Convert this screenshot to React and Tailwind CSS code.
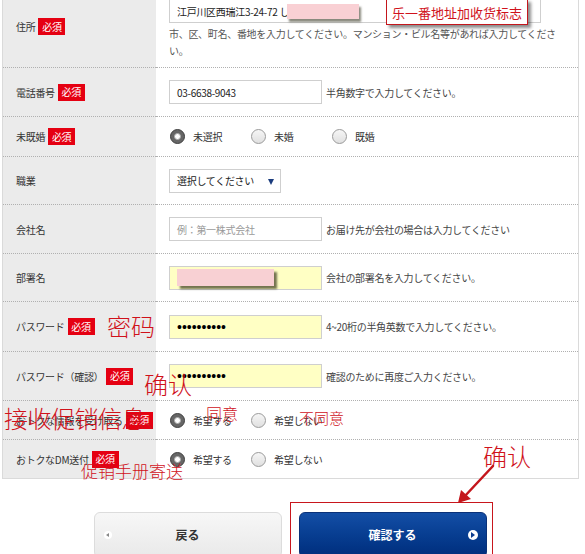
import React from "react";

const Badge = () => (
  <span className="inline-flex items-center justify-center w-[27px] h-[17px] bg-[#e50012] text-white text-[10px] leading-none shrink-0 tracking-[-0.3px]">
    必須
  </span>
);

const Label = ({ text, badge = true }) => (
  <div className="flex items-center gap-[3px] text-[10px] tracking-[-0.3px] text-[#333] whitespace-nowrap">
    <span>{text}</span>
    {badge && <Badge />}
  </div>
);

const Radio = ({ checked, label }) => (
  <div className="w-[81px] flex items-center gap-[8px] shrink-0">
    {checked ? (
      <span className="w-[15px] h-[15px] rounded-full bg-[#666] border border-[#3f3f3f] flex items-center justify-center shrink-0">
        <span className="w-[7px] h-[7px] rounded-full bg-white border border-[#aaa]" />
      </span>
    ) : (
      <span className="w-[15px] h-[15px] rounded-full border border-[#9a9a9a] bg-linear-to-b from-[#f6f6f6] to-[#e0e0e0] shrink-0" />
    )}
    <span className="text-[10px] tracking-[-0.3px] text-[#333] whitespace-nowrap">{label}</span>
  </div>
);

const Row = ({ h, label, children, last, labelClass = "items-center", rightClass = "items-center" }) => {
  const bb = last ? "" : "border-b border-dotted border-[#b0b0b0]";
  return (
    <div className={`flex ${h}`}>
      <div className={`w-[153px] shrink-0 bg-[#ebebeb] flex pl-[13px] ${labelClass} ${bb}`}>{label}</div>
      <div className={`flex-1 flex pl-[13px] ${rightClass} ${bb}`}>{children}</div>
    </div>
  );
};

const Help = ({ children }) => (
  <span className="ml-[4px] text-[10px] tracking-[-0.3px] text-[#444] whitespace-nowrap">{children}</span>
);

const Input = ({ children, yellow, placeholder }) => (
  <div
    className={`w-[153px] h-[24px] border border-[#cfcfcf] flex items-center pl-[7px] shrink-0 relative ${
      yellow ? "bg-[#ffffc4]" : "bg-white"
    } ${placeholder ? "text-[#999]" : "text-[#222]"} text-[10px] tracking-[-0.3px]`}
  >
    {children}
  </div>
);

const Dots = () => (
  <span className="[font-family:'Liberation_Sans',sans-serif] text-[14px] text-black leading-none tracking-[0px]">
    ••••••••••
  </span>
);

export default function App() {
  return (
    <div className="relative w-[585px] h-[554px] overflow-hidden bg-white [font-family:'Noto_Sans_CJK_JP','Noto_Sans',sans-serif]">
      <div className="ml-[2px] w-[577px] border-l border-r border-b border-[#dadada]">
        <Row
          h="h-[68px]"
          label={<Label text="住所" />}
          labelClass="items-start pt-[18px]"
          rightClass="flex-col items-start"
        >
          <div className="w-[372px] h-[24px] -mt-[1px] border border-[#cfcfcf] flex items-center pl-[7px] text-[10px] tracking-[-0.3px] text-[#222] relative">
            江戸川区西瑞江3-24-72 し
            <span className="absolute left-[117px] top-[4px] w-[72px] h-[15px] bg-[#f9d0d4] shadow-[2px_3px_2px_rgba(60,60,40,0.6)]" />
          </div>
          <p className="mt-[2px] w-[392px] text-[10px] tracking-[-0.3px] leading-[17px] text-[#555]">
            市、区、町名、番地を入力してください。マンション・ビル名等があれば入力してください。
          </p>
        </Row>
        <Row h="h-[49px]" label={<Label text="電話番号" />}>
          <Input>03-6638-9043</Input>
          <Help>半角数字で入力してください。</Help>
        </Row>
        <Row h="h-[40px]" label={<Label text="未既婚" />}>
          <div className="flex pl-[1px]">
            <Radio checked label="未選択" />
            <Radio label="未婚" />
            <Radio label="既婚" />
          </div>
        </Row>
        <Row h="h-[48px]" label={<Label text="職業" badge={false} />}>
          <div className="w-[112px] h-[24px] border border-[#cfcfcf] flex items-center pl-[7px] text-[10px] tracking-[-0.3px] text-[#222] relative">
            選択してください
            <span className="absolute left-[98px] top-[9px] w-0 h-0 border-l-[3.5px] border-r-[3.5px] border-t-[6px] border-l-transparent border-r-transparent border-t-[#1b3c7e]" />
          </div>
        </Row>
        <Row h="h-[49px]" label={<Label text="会社名" badge={false} />}>
          <Input placeholder>例：第一株式会社</Input>
          <Help>お届け先が会社の場合は入力してください</Help>
        </Row>
        <Row h="h-[48px]" label={<Label text="部署名" badge={false} />}>
          <Input yellow>
            <span className="absolute left-[7px] top-[2px] w-[97px] h-[17px] bg-[#f8d0d3] shadow-[3px_3px_2px_rgba(70,70,40,0.75)]" />
          </Input>
          <Help>会社の部署名を入力してください。</Help>
        </Row>
        <Row h="h-[50px]" label={<Label text="パスワード" />}>
          <Input yellow>
            <Dots />
          </Input>
          <Help>4~20桁の半角英数で入力してください。</Help>
        </Row>
        <Row h="h-[49px]" label={<Label text="パスワード（確認）" />}>
          <Input yellow>
            <Dots />
          </Input>
          <Help>確認のために再度ご入力ください。</Help>
        </Row>
        <Row h="h-[39px]" label={<Label text="おトクな情報を受け取る" />}>
          <div className="flex pl-[1px]">
            <Radio checked label="希望する" />
            <Radio label="希望しない" />
          </div>
        </Row>
        <Row h="h-[38px]" last label={<Label text="おトクなDM送付" />}>
          <div className="flex pl-[1px]">
            <Radio checked label="希望する" />
            <Radio label="希望しない" />
          </div>
        </Row>
      </div>

      <div className="mt-[23px] ml-[2px] pl-[5px] w-[577px] flex justify-center items-start gap-[8px]">
        <div className="mt-[10px] w-[188px] h-[46px] rounded-[6px] border border-[#dcdcdc] bg-linear-to-b from-[#f7f7f7] to-[#e9e9e9] relative flex items-center justify-center">
          <span className="absolute left-[9px] top-[18px] w-[8px] h-[8px] rounded-full bg-white flex items-center justify-center">
            <span className="w-0 h-0 border-t-[2.5px] border-b-[2.5px] border-r-[3px] border-t-transparent border-b-transparent border-r-[#888] -ml-[1px]" />
          </span>
          <span className="text-[12px] font-bold text-[#333]">戻る</span>
        </div>
        <div className="border border-[#c8161d] pl-[8px] pr-[5px] pt-[9px] pb-[6px]">
          <div className="w-[188px] h-[46px] rounded-[6px] border border-[#0a3178] bg-linear-to-b from-[#134ea6] to-[#002d7c] relative flex items-center justify-center">
            <span className="text-[12px] font-bold text-white">確認する</span>
            <span className="absolute right-[8px] top-[17px] w-[10px] h-[10px] rounded-full bg-white flex items-center justify-center">
              <span className="w-0 h-0 border-t-[3px] border-b-[3px] border-l-[4px] border-t-transparent border-b-transparent border-l-[#0b3c8f] ml-[1px]" />
            </span>
          </div>
        </div>
      </div>

      {/* annotations */}
      <div className="absolute left-[386px] -top-[1px] w-[142px] h-[26px] bg-white border border-[#c4161c] shadow-[3px_3px_3px_rgba(0,0,0,0.45)] flex items-center justify-center text-[13px] text-[#d0121b] [font-family:'Noto_Sans_CJK_SC',sans-serif] leading-none">
        乐一番地址加收货标志
      </div>
      <div className="absolute left-[107px] top-[314px] text-[24px] leading-none text-[#d0121b] [font-family:'Noto_Sans_CJK_SC',sans-serif] font-light">
        密码
      </div>
      <div className="absolute left-[144px] top-[372px] text-[24px] leading-none text-[#d0121b] [font-family:'Noto_Sans_CJK_SC',sans-serif] font-light">
        确认
      </div>
      <div className="absolute left-[4px] top-[406px] text-[24px] leading-none text-[#d0121b] [font-family:'Noto_Sans_CJK_SC',sans-serif] font-light tracking-[-0.5px]">
        接收促销信息、
      </div>
      <div className="absolute left-[206px] top-[405px] text-[16px] leading-none text-[#d0121b] [font-family:'Noto_Sans_CJK_SC',sans-serif] font-light">
        同意
      </div>
      <div className="absolute left-[299px] top-[410px] text-[15px] leading-none text-[#d0121b] [font-family:'Noto_Sans_CJK_SC',sans-serif] font-light">
        不同意
      </div>
      <div className="absolute left-[81px] top-[462px] text-[17px] leading-none text-[#d0121b] [font-family:'Noto_Sans_CJK_SC',sans-serif] font-light">
        促销手册寄送
      </div>
      <div className="absolute left-[483px] top-[444px] text-[24px] leading-none text-[#d0121b] [font-family:'Noto_Sans_CJK_SC',sans-serif] font-light">
        确认
      </div>
      <svg className="absolute left-[450px] top-[462px]" width="50" height="46" viewBox="0 0 50 46">
        <line x1="43" y1="4" x2="14" y2="35" stroke="#c4161c" strokeWidth="2.5" strokeLinecap="round" />
        <polygon points="8,41 11,28 21,37" fill="#c4161c" />
      </svg>
    </div>
  );
}
